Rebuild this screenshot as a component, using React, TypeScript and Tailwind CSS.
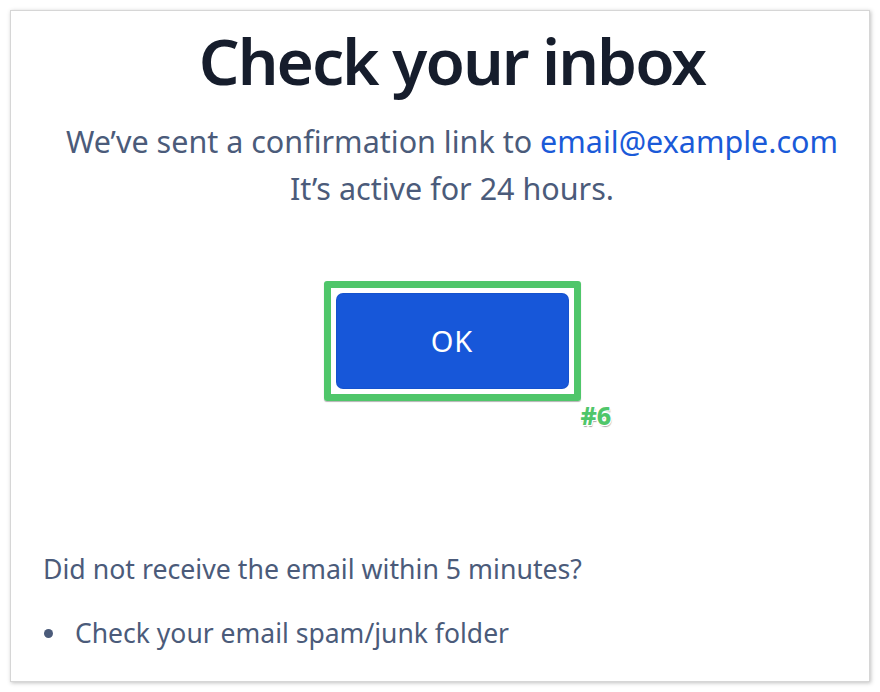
import React from "react";

export default function App() {
  return (
    <div className="w-[880px] h-[692px] bg-white p-[10px]" style={{ fontFamily: '"Noto Sans", "Open Sans", sans-serif' }}>
      <div className="w-[860px] h-[672px] bg-white border border-[#d6d6d6] shadow-[1px_1px_4px_rgba(0,0,0,0.25)] flex flex-col pl-[32px] pr-[8px]">
        <h1 className="mt-[14px] text-center text-[64px] leading-[72px] font-semibold tracking-[-2px] text-[#161d2c]">Check your inbox</h1>
        <p className="mt-[21px] text-center text-[30.5px] leading-[47px] text-[#4b5b7a]">
          We’ve sent a confirmation link to <span className="text-[#1a5ad8]">email@example.com</span>
          <br />
          It’s active for 24 hours.
        </p>
        <div className="mt-[69px] flex justify-center">
          <div className="relative">
            <div className="border-[7px] border-[#4fc66a] rounded-[3px] p-[5px] shadow-[0_1px_1px_rgba(0,0,0,0.3)]">
              <button className="w-[233px] h-[96px] bg-[#1757d9] rounded-[7px] text-white text-[29px] tracking-[1px] shadow-[inset_0_0_0_1px_rgba(0,0,0,0.05)]">OK</button>
            </div>
            <span
              className="absolute left-[257px] top-[122px] text-[25px] leading-[25px] font-extrabold text-[#4fc66a]"
              style={{ textShadow: "1px 0 0 #fff, -1px 0 0 #fff, 0 1px 0 #fff, 0 -1px 0 #fff, 1px 1px 0 #fff, -1px -1px 0 #fff, 1px -1px 0 #fff, -1px 1px 0 #fff, 1px 2px 1px rgba(0,0,0,0.35)" }}
            >
              #6
            </span>
          </div>
        </div>
        <p className="mt-[152px] text-[26.7px] leading-[32px] text-[#4b5b7a]">Did not receive the email within 5 minutes?</p>
        <ul className="mt-[32px] text-[26.5px] leading-[32px] text-[#4b5b7a]">
          <li className="flex items-center">
            <span className="ml-[1px] w-[9px] h-[9px] rounded-full bg-[#4b5b7a]" />
            <span className="ml-[22px]">Check your email spam/junk folder</span>
          </li>
        </ul>
      </div>
    </div>
  );
}
